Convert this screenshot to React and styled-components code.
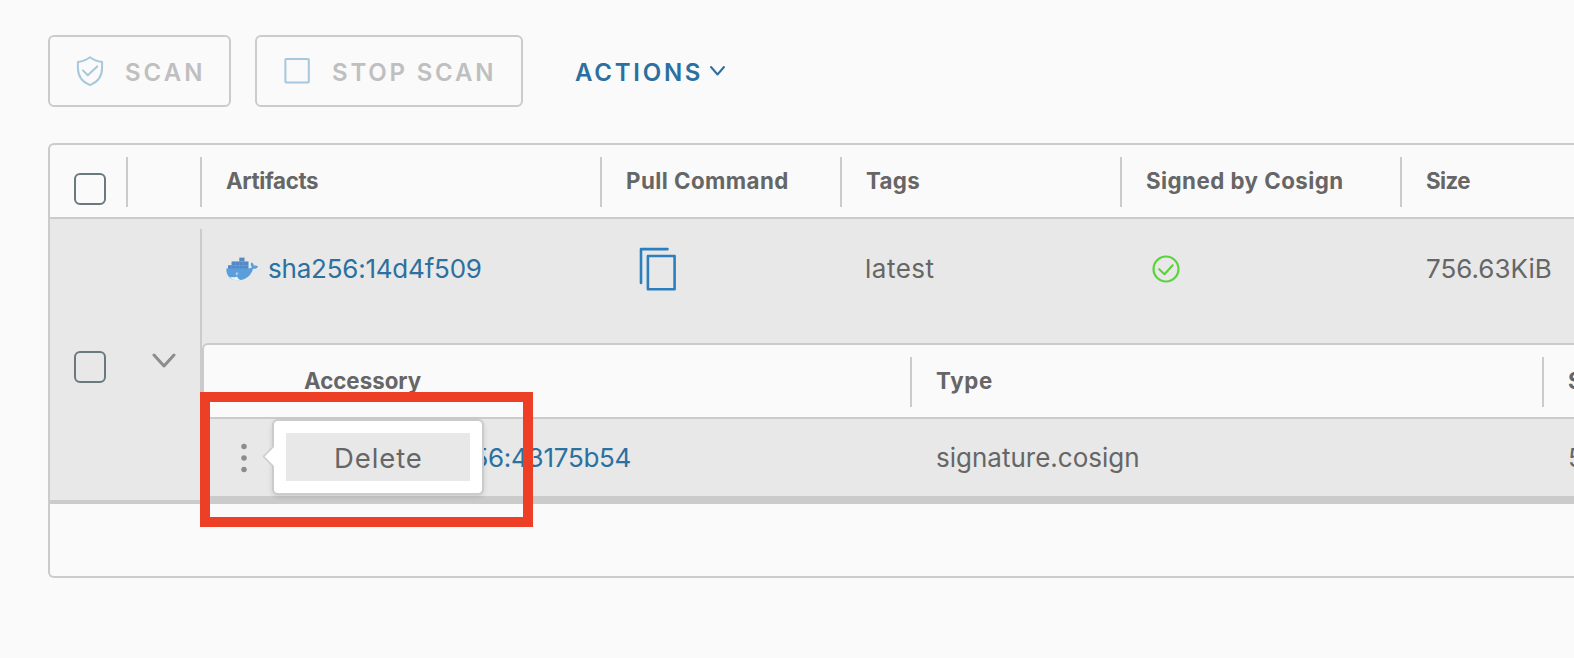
import React from "react";
import styled, { createGlobalStyle } from "styled-components";

const color = {
  page: "#fafafa",
  row: "#e8e8e8",
  line: "#cbcbcb",
  text: "#666666",
  link: "#2b709f",
  disabled: "#bfbfbf",
  disabledIcon: "#a6c7dc",
  icon: "#8c8c8c",
};

const GlobalStyle = createGlobalStyle`
  *, *::before, *::after { box-sizing: border-box; }
  html, body { margin: 0; overflow: hidden; background: ${color.page}; }
  body { font-family: Inter, "Liberation Sans", sans-serif; color: ${color.text}; }
  svg { display: block; flex: none; }
`;

const Page = styled.main`
  position: relative;
  width: 1574px;
  height: 658px;
  padding: 35px 0 0 48px;
  overflow: hidden;
`;

const Toolbar = styled.div`
  display: flex;
  gap: 24px;
  height: 72px;
  margin-bottom: 36px;
`;

const ToolButton = styled.button`
  display: flex;
  align-items: center;
  width: ${(p) => p.$width}px;
  padding: 4px 0 0 26px;
  border: 2px solid ${color.line};
  border-radius: 6px;
  background: transparent;
  color: ${color.disabled};
  font: 600 24px/30px Inter, sans-serif;
  letter-spacing: ${(p) => p.$track}px;
  white-space: nowrap;

  svg {
    margin: 0 21px 4px 0;
  }
`;

const ActionsButton = styled(ToolButton)`
  padding-left: 26px;
  border-color: transparent;
  color: ${color.link};

  svg {
    margin: 0 0 4px 6px;
  }
`;

const Datagrid = styled.section`
  width: 1540px;
  border: 2px solid ${color.line};
  border-right: 0;
  border-radius: 6px 0 0 6px;
`;

const Header = styled.div`
  display: flex;
  height: 74px;
  border-bottom: 2px solid ${color.line};
`;

const HeaderCell = styled.div`
  display: flex;
  flex: none;
  width: ${(p) => p.$width}px;
`;

const Separator = styled.span`
  flex: none;
  width: 2px;
  height: 50px;
  margin-top: 12px;
  background: ${color.line};
`;

const HeaderLabel = styled.span`
  padding-left: ${(p) => p.$indent ?? 24}px;
  font-size: 22.3px;
  font-weight: 700;
  line-height: 72px;
  letter-spacing: ${(p) => p.$track}px;
  white-space: nowrap;
`;

const Checkbox = styled.span`
  width: 32px;
  height: 32px;
  margin: ${(p) => p.$top}px 0 0 24px;
  border: 2px solid #69797f;
  border-radius: 6px;
`;

const Row = styled.div`
  display: flex;
  height: 285px;
  border-bottom: 4px solid ${color.line};
  background: ${color.row};
`;

const RowControls = styled.div`
  display: flex;
  width: 150px;
  flex: none;

  svg {
    margin: 134px 0 0 46px;
  }
`;

const RowDivider = styled.span`
  width: 2px;
  flex: none;
  margin-top: 10px;
  background: ${color.line};
`;

const RowBody = styled.div`
  flex: none;
  width: 1390px;
`;

const Cells = styled.div`
  display: flex;
  height: 124px;
  padding-bottom: 24px;
`;

const Cell = styled.div`
  display: flex;
  align-items: center;
  flex: none;
  width: ${(p) => p.$width}px;
  padding-left: ${(p) => p.$indent ?? 24}px;
  font-size: 26px;
  line-height: 32px;
  letter-spacing: ${(p) => p.$track ?? 0}px;
  white-space: nowrap;
`;

const Link = styled.a`
  color: ${color.link};
`;

const ArtifactLink = styled(Link)`
  margin-left: 9px;
`;

const SubGrid = styled.div`
  border: 2px solid ${color.line};
  border-right: 0;
  border-bottom-width: 8px;
  border-radius: 6px 0 0 0;
  height: 161px;
  background: ${color.page};
`;

const SubRow = styled.div`
  display: flex;
  height: 77px;
  background: ${color.row};
`;

const MenuCell = styled.div`
  position: relative;
  display: flex;
  width: 80px;
  flex: none;
  padding: 24px 0 0 36px;
`;

const Popover = styled.div`
  position: absolute;
  z-index: 1;
  top: 0;
  left: 68px;
  width: 212px;
  height: 76px;
  padding: 12px;
  border: 2px solid ${color.line};
  border-radius: 6px;
  background: #fff;
  box-shadow: 0 2px 5px rgba(0, 0, 0, 0.12);

  svg {
    position: absolute;
    left: -12px;
    top: 24px;
  }
`;

const MenuItem = styled.div`
  width: 184px;
  height: 48px;
  padding-left: 48px;
  background: ${color.row};
  font-size: 27.5px;
  line-height: 50px;
  letter-spacing: 0.9px;
`;

const Footer = styled.div`
  height: 72px;
`;

const Highlight = styled.div`
  position: absolute;
  z-index: 2;
  left: 200px;
  top: 392px;
  width: 333px;
  height: 135px;
  border: 10px solid #ec3f26;
`;

const ShieldIcon = () => (
  <svg width="28" height="32" viewBox="0 0 28 32" fill="none" stroke={color.disabledIcon} strokeWidth="2" strokeLinejoin="round" strokeLinecap="round">
    <path d="M14 2.3 C10.8 4.8 6.7 6.5 1.9 7 V13 C1.9 21.5 6.3 27 14 30.1 C21.7 27 26.1 21.5 26.1 13 V7 C21.3 6.5 17.2 4.8 14 2.3 Z" />
    <path d="M6.9 15.4 11.8 20.3 21.2 11.4" />
  </svg>
);

const StopIcon = () => (
  <svg width="28" height="32" viewBox="0 0 28 32" fill="none" stroke={color.disabledIcon} strokeWidth="2">
    <rect x="2.4" y="4" width="23.4" height="23.6" rx="0.8" />
  </svg>
);

const Chevron = ({ width, height, stroke, weight }) => (
  <svg width={width} height={height} viewBox={`0 0 ${width} ${height}`} fill="none" stroke={stroke} strokeWidth={weight} strokeLinecap="round" strokeLinejoin="round">
    <path d={`M2 2 L${width / 2} ${height - 2.5} L${width - 2} 2`} />
  </svg>
);

const WhaleIcon = () => (
  <svg width="33" height="24" viewBox="0 0 33 24">
    <g fill="#5289c6">
      <path d="M13.3 0.6h5.2v3.8h-5.2z" />
      <path d="M5.8 4.4h16.700v3.8H5.8z" />
      <path d="M2 8.2h20.500V13H2z" />
    </g>
    <path d="M0.3 11.6H22c2.400-.1 3.600-.7 3.900-1.500-1.500-1.600-1.400-3.400-.3-4.800 1.600 1 2.200 2.200 2.200 3.500 1.600-.4 3-.2 4.200.6-.7 1.700-2.200 2.500-4.900 2.400C24.700 19.400 19.300 23.200 12 23.200 4.500 23.200.1 19.300.3 11.600Z" fill="#5a9fdc" />
    <path d="M3.800 19.900c2.600.6 5.300.4 7.400-.5.4 1.600 1.700 2.900 3.400 3.500-4.500.8-8.200-.1-10.800-3Z" fill="#f3f8fc" />
    <circle cx="11" cy="16.700" r="1.300" fill="#d5e7f6" />
    <circle cx="11.200" cy="16.800" r="0.600" fill="#47647f" />
    <path d="M5.700 5v7M9.500 5v7M13.300 4.400v7.600M17.200 5v7" stroke="#6a9bd0" strokeWidth="0.600" />
  </svg>
);

const CopyIcon = () => (
  <svg width="38" height="46" viewBox="0 0 38 46" fill="none" stroke="#2d7ebd" strokeWidth="2.600" strokeLinecap="round" strokeLinejoin="round">
    <path d="M28.500 3.100H2V37" />
    <rect x="8.900" y="10" width="26.700" height="33.200" />
  </svg>
);

const CheckCircle = () => (
  <svg width="28" height="28" viewBox="0 0 28 28" fill="none" stroke="#5bd33c" strokeWidth="2.200" strokeLinecap="round" strokeLinejoin="round">
    <circle cx="14" cy="14" r="12.500" />
    <path d="M7.200 14.200 12.500 19.200 20.700 10.300" />
  </svg>
);

const KebabIcon = () => (
  <svg width="12" height="30" viewBox="0 0 12 30" fill={color.icon}>
    <circle cx="4" cy="3.400" r="2.750" />
    <circle cx="4" cy="15" r="2.750" />
    <circle cx="4" cy="26.600" r="2.750" />
  </svg>
);

const PopoverArrow = () => (
  <svg width="14" height="24" viewBox="0 0 14 24" fill="#fff">
    <path d="M14 1.500 11.500 1.500 1.500 11.500 11.500 21.500H14Z" />
    <path d="M11.500 1.500 1.500 11.500 11.500 21.500" fill="none" stroke={color.line} strokeWidth="1.500" />
  </svg>
);

const columns = [
  { label: "Artifacts", width: 400, track: -0.35 },
  { label: "Pull Command", width: 240, track: 0.45 },
  { label: "Tags", width: 280, track: 0.3 },
  { label: "Signed by Cosign", width: 280, track: 0.46 },
  { label: "Size", width: 190, track: -0.6 },
];

const subColumns = [
  { label: "Type", width: 632, track: 0.7 },
  { label: "Size", width: 190, track: -0.6 },
];

export default function App() {
  return (
    <Page>
      <GlobalStyle />
      <Toolbar>
        <ToolButton $width={183} $track={3} disabled>
          <ShieldIcon />
          SCAN
        </ToolButton>
        <ToolButton $width={268} $track={2.8} disabled>
          <StopIcon />
          STOP SCAN
        </ToolButton>
        <ActionsButton $width={190} $track={2.75}>
          ACTIONS
          <Chevron width={17} height={12} stroke={color.link} weight={2} />
        </ActionsButton>
      </Toolbar>

      <Datagrid>
        <Header>
          <HeaderCell $width={76}>
            <Checkbox $top={28} />
          </HeaderCell>
          <HeaderCell $width={74}>
            <Separator />
          </HeaderCell>
          {columns.map((c) => (
            <HeaderCell key={c.label} $width={c.width}>
              <Separator />
              <HeaderLabel $track={c.track}>{c.label}</HeaderLabel>
            </HeaderCell>
          ))}
        </Header>

        <Row>
          <RowControls>
            <Checkbox $top={132} />
            <Chevron width={24} height={15.5} stroke={color.icon} weight={3} />
          </RowControls>
          <RowDivider />
          <RowBody>
            <Cells>
              <Cell $width={400} $track={-0.22}>
                <WhaleIcon />
                <ArtifactLink>sha256:14d4f509</ArtifactLink>
              </Cell>
              <Cell $width={237} $indent={37}>
                <CopyIcon />
              </Cell>
              <Cell $width={281} $indent={26} $track={0.5}>latest</Cell>
              <Cell $width={280} $indent={32}>
                <CheckCircle />
              </Cell>
              <Cell $width={190} $indent={26}>756.63KiB</Cell>
            </Cells>

            <SubGrid>
              <Header>
                <HeaderCell $width={706}>
                  <HeaderLabel $indent={100} $track={0}>Accessory</HeaderLabel>
                </HeaderCell>
                {subColumns.map((c) => (
                  <HeaderCell key={c.label} $width={c.width}>
                    <Separator />
                    <HeaderLabel $track={c.track}>{c.label}</HeaderLabel>
                  </HeaderCell>
                ))}
              </Header>
              <SubRow>
                <MenuCell>
                  <KebabIcon />
                  <Popover>
                    <PopoverArrow />
                    <MenuItem>Delete</MenuItem>
                  </Popover>
                </MenuCell>
                <Cell $width={626} $indent={130} $track={-0.27}>
                  <Link>sha256:43175b54</Link>
                </Cell>
                <Cell $width={632} $indent={26}>signature.cosign</Cell>
                <Cell $width={190} $indent={26}>5.76KiB</Cell>
              </SubRow>
            </SubGrid>
          </RowBody>
        </Row>
        <Footer />
      </Datagrid>

      <Highlight />
    </Page>
  );
}
